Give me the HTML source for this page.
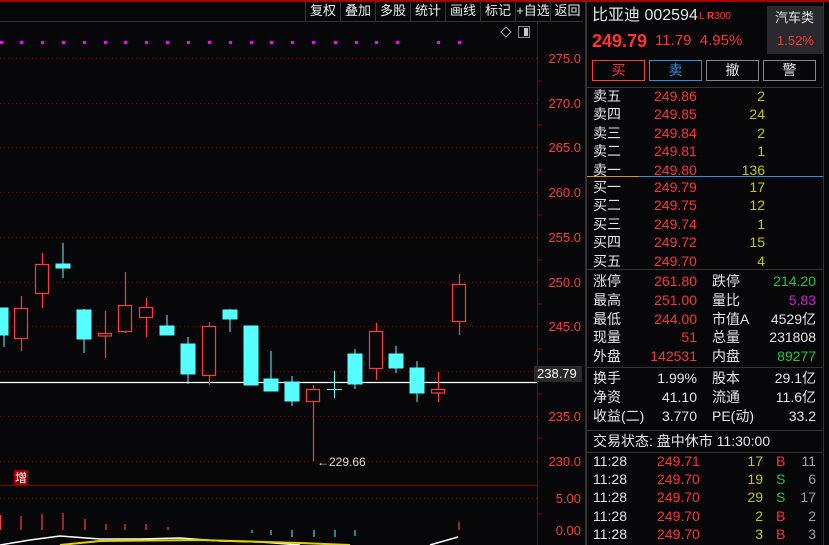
<!DOCTYPE html><html style="height:545px;overflow:hidden"><head><meta charset="utf-8"><style>
html,body{margin:0;width:829px;height:545px;overflow:hidden}
body{background:#07070a;position:relative;font-family:"Liberation Sans","Noto Sans CJK SC",sans-serif;color:#e6e6e6}
.a{position:absolute;white-space:nowrap;line-height:18px;font-size:14px}
.r{color:#ff3333}.y{color:#c8c800}.g{color:#1ec83c}.w{color:#e6e6e6}.m{color:#d020d0}.gr{color:#a0a0a0}
.tb{position:absolute;top:1px;height:20px;line-height:20px;font-size:13px;color:#eee;border-left:1px solid #333;text-align:center}
.rt{text-align:right}
.btn{position:absolute;top:60px;width:51px;height:19px;line-height:19px;text-align:center;font-size:14px;border:1px solid #888}
</style></head><body>
<div style="position:absolute;left:0;top:0;width:829px;height:2px;background:#a00"></div>
<div style="position:absolute;left:0;top:21px;width:583px;height:1px;background:#333"></div>
<div class="tb" style="left:305px;width:34px">复权</div>
<div class="tb" style="left:340px;width:34px">叠加</div>
<div class="tb" style="left:375px;width:34px">多股</div>
<div class="tb" style="left:410px;width:34px">统计</div>
<div class="tb" style="left:445px;width:34px">画线</div>
<div class="tb" style="left:480px;width:34px">标记</div>
<div class="tb" style="left:515px;width:34px">+自选</div>
<div class="tb" style="left:550px;width:33px">返回</div>
<svg style="position:absolute;left:0;top:0" width="586" height="545">
<line x1="537.5" y1="22" x2="537.5" y2="545" stroke="#800" />
<g stroke="#6a0000" stroke-dasharray="1,3">
<line x1="0" y1="58.5" x2="537" y2="58.5"/><line x1="0" y1="103.5" x2="537" y2="103.5"/><line x1="0" y1="147.5" x2="537" y2="147.5"/><line x1="0" y1="192.5" x2="537" y2="192.5"/><line x1="0" y1="237.5" x2="537" y2="237.5"/><line x1="0" y1="282.5" x2="537" y2="282.5"/><line x1="0" y1="326.5" x2="537" y2="326.5"/><line x1="0" y1="371.5" x2="537" y2="371.5"/><line x1="0" y1="416.5" x2="537" y2="416.5"/><line x1="0" y1="461.5" x2="537" y2="461.5"/><line x1="0" y1="498.5" x2="537" y2="498.5"/>
</g>
<g stroke="#800"><line x1="537" y1="81" x2="542" y2="81"/><line x1="537" y1="125" x2="542" y2="125"/><line x1="537" y1="170" x2="542" y2="170"/><line x1="537" y1="215" x2="542" y2="215"/><line x1="537" y1="260" x2="542" y2="260"/><line x1="537" y1="304" x2="542" y2="304"/><line x1="537" y1="349" x2="542" y2="349"/><line x1="537" y1="394" x2="542" y2="394"/><line x1="537" y1="438" x2="542" y2="438"/><line x1="537" y1="514" x2="542" y2="514"/></g>
<g fill="#ff00ff"><rect x="0" y="41" width="3" height="3"/><rect x="20" y="41" width="3" height="3"/><rect x="41" y="41" width="3" height="3"/><rect x="62" y="41" width="3" height="3"/><rect x="83" y="41" width="3" height="3"/><rect x="104" y="41" width="3" height="3"/><rect x="124" y="41" width="3" height="3"/><rect x="145" y="41" width="3" height="3"/><rect x="166" y="41" width="3" height="3"/><rect x="187" y="41" width="3" height="3"/><rect x="208" y="41" width="3" height="3"/><rect x="229" y="41" width="3" height="3"/><rect x="250" y="41" width="3" height="3"/><rect x="270" y="41" width="3" height="3"/><rect x="291" y="41" width="3" height="3"/><rect x="312" y="41" width="3" height="3"/><rect x="334" y="41" width="3" height="3"/><rect x="355" y="41" width="3" height="3"/><rect x="375" y="41" width="3" height="3"/><rect x="396" y="41" width="3" height="3"/><rect x="437" y="41" width="3" height="3"/><rect x="458" y="41" width="3" height="3"/></g>
<path d="M506 27l5 5-5 5-5-5z" fill="none" stroke="#aaa"/>
<rect x="518.5" y="26.5" width="11" height="11" fill="none" stroke="#888"/><rect x="524" y="28" width="4" height="8" fill="#ccc"/>
<line x1="0" y1="382.5" x2="537" y2="382.5" stroke="#fff" stroke-width="1.3"/>
<g stroke="#55ffff" fill="#55ffff">
<line x1="4" y1="308" x2="4" y2="347"/><rect x="0" y="308" width="8" height="27"/>
<line x1="63" y1="243" x2="63" y2="278"/><rect x="56" y="264" width="14" height="4"/>
<line x1="84" y1="309" x2="84" y2="353"/><rect x="77" y="310" width="14" height="29"/>
<line x1="167" y1="315" x2="167" y2="335"/><rect x="160" y="326" width="14" height="9"/>
<line x1="188" y1="337" x2="188" y2="384"/><rect x="181" y="344" width="14" height="30"/>
<line x1="230" y1="309" x2="230" y2="332"/><rect x="223" y="310" width="14" height="9"/>
<rect x="244" y="326" width="14" height="59"/>
<line x1="271" y1="351" x2="271" y2="391"/><rect x="264" y="379" width="14" height="12"/>
<line x1="292" y1="376" x2="292" y2="406"/><rect x="285" y="382" width="14" height="19"/>
<line x1="334.5" y1="371" x2="334.5" y2="398"/><line x1="327" y1="389.5" x2="342" y2="389.5"/>
<line x1="355" y1="349" x2="355" y2="389"/><rect x="348" y="354" width="14" height="30"/>
<line x1="396" y1="346" x2="396" y2="373"/><rect x="389" y="354" width="14" height="14"/>
<line x1="417" y1="361" x2="417" y2="402"/><rect x="410" y="368" width="14" height="25"/>
</g>
<g stroke="#ff3b3b" fill="#07070a" stroke-width="1.2">
<line x1="21.5" y1="296" x2="21.5" y2="351"/><rect x="14.5" y="308.5" width="13" height="30"/>
<line x1="42.5" y1="253" x2="42.5" y2="308"/><rect x="35.5" y="264.5" width="13" height="29"/>
<line x1="105.5" y1="311" x2="105.5" y2="358"/><rect x="98.5" y="333.5" width="13" height="2.5"/>
<line x1="125.5" y1="272" x2="125.5" y2="333"/><rect x="118.5" y="305.5" width="13" height="26"/>
<line x1="146.5" y1="298" x2="146.5" y2="337"/><rect x="139.5" y="307.5" width="13" height="10"/>
<line x1="209.5" y1="322" x2="209.5" y2="385"/><rect x="202.5" y="326.5" width="13" height="49"/>
<line x1="313.5" y1="385" x2="313.5" y2="461"/><rect x="306.5" y="389.5" width="13" height="12"/>
<line x1="376.5" y1="323" x2="376.5" y2="380"/><rect x="369.5" y="331.5" width="13" height="37"/>
<line x1="438.5" y1="372" x2="438.5" y2="402"/><rect x="431.5" y="389.5" width="13" height="3.5"/>
<line x1="459.5" y1="274" x2="459.5" y2="335"/><rect x="452.5" y="284.5" width="13" height="37"/>
</g>
<text x="317" y="466" fill="#ddd" font-size="12" font-family="Liberation Sans">←229.66</text>
<line x1="0" y1="485.5" x2="537" y2="485.5" stroke="#800"/>
<rect x="14" y="470" width="14" height="15" fill="#900"/><text x="15" y="482" fill="#fff" font-size="12" font-family="Noto Sans CJK SC">增</text>
<g stroke="#ff3b3b" stroke-width="1.2"><line x1="0.5" y1="515" x2="0.5" y2="530"/><line x1="21" y1="516" x2="21" y2="530"/><line x1="42" y1="514" x2="42" y2="530"/><line x1="63" y1="513" x2="63" y2="530"/><line x1="85" y1="519" x2="85" y2="530"/><line x1="106" y1="524" x2="106" y2="530"/><line x1="125" y1="524" x2="125" y2="530"/><line x1="146" y1="524" x2="146" y2="530"/><line x1="168" y1="527" x2="168" y2="530"/><line x1="459" y1="522" x2="459" y2="530"/></g>
<g stroke="#55ffff"><line x1="252" y1="530" x2="252" y2="533"/><line x1="271" y1="530" x2="271" y2="535"/><line x1="292" y1="530" x2="292" y2="537"/><line x1="314" y1="530" x2="314" y2="537"/><line x1="335" y1="530" x2="335" y2="537"/><line x1="355" y1="530" x2="355" y2="536"/></g>
<polyline points="0,545 30,540 60,536 100,539 140,539 180,538 220,541 260,542 300,545" fill="none" stroke="#fff" stroke-width="1.5"/>
<polyline points="60,545 100,541 200,540 300,543 350,545" fill="none" stroke="#e0d000" stroke-width="2"/>
<polyline points="430,545 458,537" fill="none" stroke="#fff" stroke-width="1.5"/>
<g fill="#ff3b3b" font-size="13" font-family="Liberation Sans" text-anchor="end">
<text x="581" y="63">275.0</text><text x="581" y="108">270.0</text><text x="581" y="152">265.0</text><text x="581" y="197">260.0</text><text x="581" y="242">255.0</text><text x="581" y="287">250.0</text><text x="581" y="331">245.0</text><text x="581" y="421">235.0</text><text x="581" y="466">230.0</text><text x="581" y="503">5.00</text><text x="581" y="535">0.00</text></g>
<rect x="534" y="366" width="48" height="16" fill="#2a2a2a"/><text x="537" y="378" fill="#fff" font-size="13" font-family="Liberation Sans">238.79</text>
</svg>
<div style="position:absolute;left:585px;top:0;width:2px;height:545px;background:#333"></div>
<div style="position:absolute;left:823px;top:0;width:1px;height:545px;background:#333"></div>
<div class="a w" style="left:592px;top:6px;font-size:16px;line-height:20px">比亚迪 002594</div>
<div class="a r" style="left:699px;top:8px;font-size:10px">L <b>R</b>300</div>
<div style="position:absolute;left:767px;top:6px;width:56px;height:48px;background:#2a2a2e"></div>
<div class="a w" style="left:775px;top:9px;font-size:13px">汽车类</div>
<div class="a r" style="left:777px;top:32px;font-size:13px">1.52%</div>
<div class="a r" style="left:592px;top:30px;font-size:18px;font-weight:bold;line-height:22px">249.79</div>
<div class="a r" style="left:655px;top:32px;font-size:15px">11.79&nbsp;&nbsp;4.95%</div>
<div class="btn r" style="left:592px;border-color:#ff3b3b">买</div>
<div class="btn" style="left:649px;border-color:#3090e0;color:#3090e0">卖</div>
<div class="btn w" style="left:706px">撤</div>
<div class="btn w" style="left:763px">警</div>
<div style="position:absolute;left:587px;top:87px;width:236px;height:1px;background:#333"></div>
<div style="position:absolute;left:587px;top:176px;width:52px;height:1px;background:#e09020"></div>
<div style="position:absolute;left:639px;top:176px;width:184px;height:1px;background:#3090e0"></div>
<div style="position:absolute;left:587px;top:269px;width:236px;height:1px;background:#333"></div>
<div style="position:absolute;left:587px;top:367px;width:236px;height:1px;background:#333"></div>
<div style="position:absolute;left:587px;top:430px;width:236px;height:1px;background:#333"></div>
<div style="position:absolute;left:587px;top:452px;width:236px;height:1px;background:#333"></div>
<div class="a w" style="left:593px;top:87px;line-height:18.4px">卖五<br>卖四<br>卖三<br>卖二<br>卖一</div>
<div class="a r" style="left:654px;top:87px;line-height:18.4px">249.86<br>249.85<br>249.84<br>249.81<br>249.80</div>
<div class="a y rt" style="left:700px;width:65px;top:87px;line-height:18.4px">2<br>24<br>2<br>1<br>136</div>
<div class="a w" style="left:593px;top:178px;line-height:18.4px">买一<br>买二<br>买三<br>买四<br>买五</div>
<div class="a r" style="left:654px;top:178px;line-height:18.4px">249.79<br>249.75<br>249.74<br>249.72<br>249.70</div>
<div class="a y rt" style="left:700px;width:65px;top:178px;line-height:18.4px">17<br>12<br>1<br>15<br>4</div>
<div class="a w" style="left:593px;top:272px;line-height:18.8px">涨停<br>最高<br>最低<br>现量<br>外盘</div>
<div class="a r rt" style="left:640px;width:57px;top:272px;line-height:18.8px">261.80<br>251.00<br>244.00<br>51<br>142531</div>
<div class="a w" style="left:712px;top:272px;line-height:18.8px">跌停<br>量比<br>市值A<br>总量<br>内盘</div>
<div class="a rt" style="left:760px;width:56px;top:272px;line-height:18.8px"><span class="g">214.20</span><br><span class="m">5.83</span><br>4529亿<br>231808<br><span class="g">89277</span></div>
<div class="a w" style="left:593px;top:369px;line-height:19px">换手<br>净资<br>收益(二)</div>
<div class="a w rt" style="left:640px;width:57px;top:369px;line-height:19px">1.99%<br>41.10<br>3.770</div>
<div class="a w" style="left:712px;top:369px;line-height:19px">股本<br>流通<br>PE(动)</div>
<div class="a w rt" style="left:760px;width:56px;top:369px;line-height:19px">29.1亿<br>11.6亿<br>33.2</div>
<div class="a w" style="left:593px;top:432px">交易状态: 盘中休市 11:30:00</div>
<div style="position:absolute;left:587px;top:452px;width:236px;height:93px;overflow:hidden">
<div class="a w" style="left:6px;top:0;line-height:18.2px">11:28<br>11:28<br>11:28<br>11:28<br>11:28<br>11:28</div>
<div class="a r" style="left:70px;top:0;line-height:18.2px">249.71<br>249.70<br>249.70<br>249.70<br>249.70<br>249.70</div>
<div class="a y rt" style="left:143px;width:33px;top:0;line-height:18.2px">17<br>19<br>29<br>2<br>3<br>1</div>
<div class="a" style="left:189px;top:0;line-height:18.2px"><span class="r">B</span><br><span class="g">S</span><br><span class="g">S</span><br><span class="r">B</span><br><span class="r">B</span><br><span class="g">S</span></div>
<div class="a gr rt" style="left:203px;width:26px;top:0;line-height:18.2px">11<br>6<br>17<br>2<br>3<br>1</div>
</div>
</body></html>
